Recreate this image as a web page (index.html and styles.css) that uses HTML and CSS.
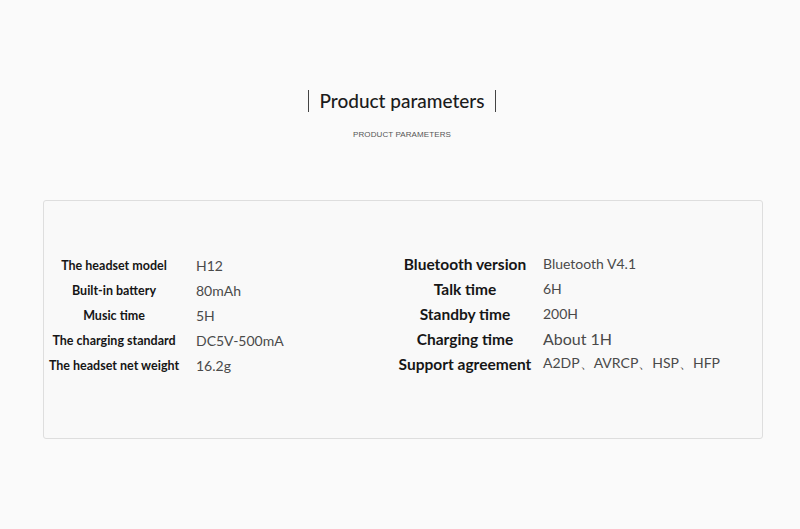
FILE: index.html
```html
<!DOCTYPE html>
<html lang="en">
<head>
    <meta charset="UTF-8">
    <meta name="viewport" content="width=device-width, initial-scale=1.0">
    <title>Product parameters</title>
    <link rel="stylesheet" href="styles.css">
</head>
<body>
    <div class="page">
        <!-- Heading -->
        <div class="heading">
            <h1 class="title"><span>Product parameters</span></h1>
            <div class="subtitle">PRODUCT PARAMETERS</div>
        </div>

        <!-- Spec card -->
        <div class="card">
            <div class="spec-list left">
                <div class="label">The headset model</div>
                <div class="value">H12</div>
                <div class="label">Built-in battery</div>
                <div class="value">80mAh</div>
                <div class="label">Music time</div>
                <div class="value">5H</div>
                <div class="label">The charging standard</div>
                <div class="value">DC5V-500mA</div>
                <div class="label">The headset net weight</div>
                <div class="value">16.2g</div>
            </div>
            <div class="spec-list right">
                <div class="label">Bluetooth version</div>
                <div class="value">Bluetooth V4.1</div>
                <div class="label">Talk time</div>
                <div class="value">6H</div>
                <div class="label">Standby time</div>
                <div class="value">200H</div>
                <div class="label">Charging time</div>
                <div class="value big">About 1H</div>
                <div class="label">Support agreement</div>
                <div class="value">A2DP、AVRCP、HSP、HFP</div>
            </div>
        </div>
    </div>
</body>
</html>
```
FILE: styles.css
```css
body {
    margin: 0;
    background-color: #fafafa;
    font-family: Lato, "Noto Sans", sans-serif;
    color: #1a1a1a;
}
.page {
    width: 800px;
    height: 529px;
    box-sizing: border-box;
    padding-top: 88px;
}
.heading {
    text-align: center;
}
.title {
    margin: 0;
    font-size: 19px;
    font-weight: 500;
    line-height: 26px;
    color: #1c1c1c;
}
.title span {
    display: inline-block;
    padding: 0 10px;
    border-left: 1px solid #444;
    border-right: 1px solid #444;
    line-height: 22px;
    margin-left: 4px;
}
.subtitle {
    margin-top: 16px;
    font-family: "Liberation Sans", Arial, sans-serif;
    font-size: 8px;
    color: #555;
    letter-spacing: 0.1px;
    padding-left: 4px;
}
.card {
    margin: 61px 0 0 43px;
    width: 720px;
    height: 239px;
    box-sizing: border-box;
    border: 1px solid #dedede;
    border-radius: 3px;
    background-color: #f9f9f9;
    padding: 52px 0 0 4px;
    display: flex;
}
.spec-list {
    display: grid;
    grid-auto-rows: 25px;
    align-items: center;
    align-content: start;
}
.spec-list.left {
    width: 347px;
    grid-template-columns: 132px 1fr;
    column-gap: 16px;
}
.spec-list.right {
    flex: 1;
    grid-template-columns: 140px 1fr;
    column-gap: 8px;
    margin-top: -2px;
}
.label {
    text-align: center;
    font-weight: 700;
    white-space: nowrap;
    color: #161616;
}
.left .label {
    font-size: 12.5px;
}
.right .label {
    font-size: 15.5px;
}
.value {
    font-size: 14px;
    color: #4a4a4a;
    white-space: nowrap;
}
.value.big {
    font-size: 16px;
}
```
